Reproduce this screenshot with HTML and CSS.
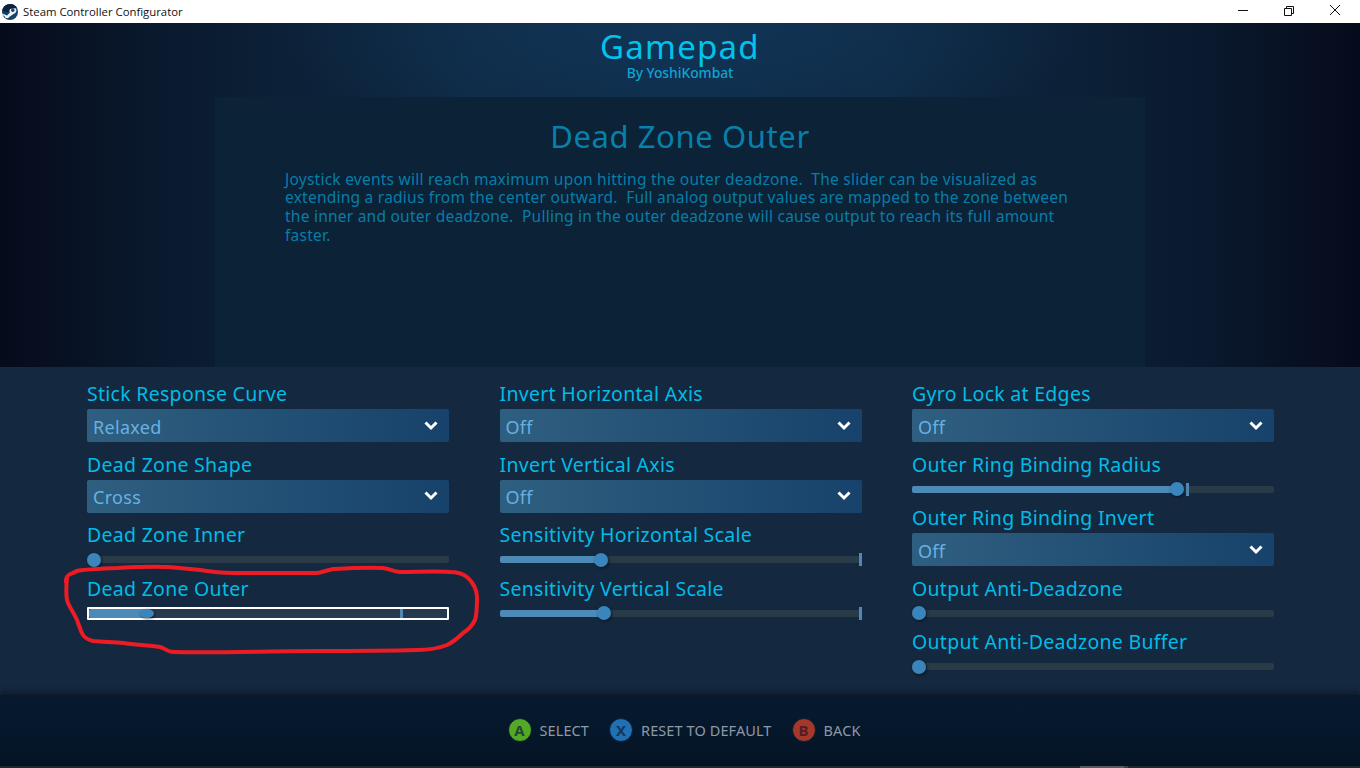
FILE: index.html
```html
<!DOCTYPE html>
<html lang="en">
<head>
<meta charset="utf-8">
<title>Steam Controller Configurator</title>
<link rel="stylesheet" href="styles.css">
</head>
<body>
<div class="app">
  <header class="titlebar">
    <svg class="logo" viewBox="0 0 16 16"><circle cx="8" cy="8" r="8" fill="#17406a"/><path d="M0.2 9.500 L5 11.500 L8 8.500 A3.500 3.500 0 1 1 11.500 10 L7.500 12.800 A2.600 2.600 0 0 1 2.600 12.200 L0.300 11 Z" fill="#eef2f5"/><path d="M0.200 7 A8 8 0 0 1 15 4 L8 5 L6 8.500 Z" fill="#0c2340"/><circle cx="10.800" cy="6.300" r="1.700" fill="#17406a"/></svg>
    <span class="titlebar-text">Steam Controller Configurator</span>
    <div class="window-controls">
      <svg class="win-icon" viewBox="0 0 46 23"><path d="M18 10.500h10" stroke="#111" fill="none"/></svg>
      <svg class="win-icon" viewBox="0 0 46 23"><path d="M18.500 8.500h7v7h-7z M20.500 8.500v-2h7v7h-2" stroke="#111" fill="none"/></svg>
      <svg class="win-icon" viewBox="0 0 46 23"><path d="M18 5l10 10M28 5l-10 10" stroke="#111" fill="none"/></svg>
    </div>
  </header>

  <section class="hero">
    <h1 class="game-title">Gamepad</h1>
    <div class="byline">By YoshiKombat</div>
    <div class="info-panel">
      <h2 class="info-title">Dead Zone Outer</h2>
      <p class="info-text">Joystick events will reach maximum upon hitting the outer deadzone.&nbsp; The slider can be visualized as extending a radius from the center outward.&nbsp; Full analog output values are mapped to the zone between the inner and outer deadzone.&nbsp; Pulling in the outer deadzone will cause output to reach its full amount faster.</p>
    </div>
  </section>

  <section class="settings">
    <div class="column">
      <div class="field field-select"><div class="label">Stick Response Curve</div><div class="select"><span>Relaxed</span><svg class="chev" viewBox="0 0 14 10"><path d="M1.500 1.500L7 7l5.500-5.500" /></svg></div></div>
      <div class="field field-select"><div class="label">Dead Zone Shape</div><div class="select"><span>Cross</span><svg class="chev" viewBox="0 0 14 10"><path d="M1.500 1.500L7 7l5.500-5.500" /></svg></div></div>
      <div class="field field-slider"><div class="label">Dead Zone Inner</div><div class="slider"><div class="thumb" style="left:7px"></div></div></div>
      <div class="field field-slider"><div class="label">Dead Zone Outer</div><div class="slider focused"><div class="fill" style="width:58px"></div><div class="tick" style="left:311px"></div><div class="thumb" style="left:58px"></div></div></div>
    </div>
    <div class="column">
      <div class="field field-select"><div class="label">Invert Horizontal Axis</div><div class="select"><span>Off</span><svg class="chev" viewBox="0 0 14 10"><path d="M1.500 1.500L7 7l5.500-5.500" /></svg></div></div>
      <div class="field field-select"><div class="label">Invert Vertical Axis</div><div class="select"><span>Off</span><svg class="chev" viewBox="0 0 14 10"><path d="M1.500 1.500L7 7l5.500-5.500" /></svg></div></div>
      <div class="field field-slider"><div class="label">Sensitivity Horizontal Scale</div><div class="slider"><div class="fill" style="width:101px"></div><div class="tick" style="left:359px"></div><div class="thumb" style="left:101px"></div></div></div>
      <div class="field field-slider"><div class="label">Sensitivity Vertical Scale</div><div class="slider"><div class="fill" style="width:104px"></div><div class="tick" style="left:359px"></div><div class="thumb" style="left:104px"></div></div></div>
    </div>
    <div class="column">
      <div class="field field-select"><div class="label">Gyro Lock at Edges</div><div class="select"><span>Off</span><svg class="chev" viewBox="0 0 14 10"><path d="M1.500 1.500L7 7l5.500-5.500" /></svg></div></div>
      <div class="field field-slider"><div class="label">Outer Ring Binding Radius</div><div class="slider"><div class="fill" style="width:265px"></div><div class="tick" style="left:274px"></div><div class="thumb" style="left:265px"></div></div></div>
      <div class="field field-select"><div class="label">Outer Ring Binding Invert</div><div class="select"><span>Off</span><svg class="chev" viewBox="0 0 14 10"><path d="M1.500 1.500L7 7l5.500-5.500" /></svg></div></div>
      <div class="field field-slider"><div class="label">Output Anti-Deadzone</div><div class="slider"><div class="thumb" style="left:7px"></div></div></div>
      <div class="field field-slider"><div class="label">Output Anti-Deadzone Buffer</div><div class="slider"><div class="thumb" style="left:7px"></div></div></div>
    </div>
  </section>

  <footer class="footer">
    <div class="hint"><span class="btn btn-a">A</span><span>SELECT</span></div>
    <div class="hint"><span class="btn btn-x">X</span><span>RESET TO DEFAULT</span></div>
    <div class="hint"><span class="btn btn-b">B</span><span>BACK</span></div>
  </footer>
  <div class="edge-strip"><div class="edge-thumb"></div><div class="edge-end"></div></div>

  <svg class="annotation" viewBox="0 0 1360 768"><path d="M66 582C65 577 69 574 73 573C76 571 80 570 83 570C95 569 105 568 117 568C135 567 150 566 167 567C180 568 190 569 200 570C212 572 222 573 233 573C262 573 290 573 317 573C323 572 328 570 333 569C350 568 366 567 383 568C390 569 395 572 400 572C417 572 433 571 450 572C458 572 463 574 467 577C473 582 477 590 477 597C477 606 477 614 475 620C472 626 468 630 463 633C458 638 453 642 447 645C437 649 427 650 417 650C384 651 350 651 317 651C269 651 221 653 173 652C167 652 165 648 160 647C148 645 136 645 123 643C113 642 103 642 93 641C88 640 85 638 83 635C80 630 79 625 77 620C74 613 69 607 67 600C66 594 66 588 67 578"/></svg>
</div>
</body>
</html>
```

FILE: styles.css
```css
* { box-sizing: border-box; }
html, body { margin: 0; height: 100%; }
body { font-family: "Noto Sans", "Open Sans", sans-serif; overflow: hidden; background: #04162c; }
.app { position: relative; width: 1360px; height: 768px; display: flex; flex-direction: column; }

.titlebar { height: 23px; background: #fff; display: flex; align-items: center; flex: none; padding: 0 2px; }
.logo { width: 16px; height: 16px; margin-right: 5px; }
.titlebar-text { font-size: 11.350px; color: #111; font-family: "Open Sans", sans-serif; }
.window-controls { margin-left: auto; display: flex; }
.win-icon { width: 46px; height: 23px; }

.hero { height: 344px; flex: none; position: relative; display: flex; flex-direction: column; align-items: center;
  background:
    radial-gradient(ellipse 420px 120px at 50% 0, rgba(18,62,100,.5), rgba(18,62,100,0)),
    linear-gradient(90deg, #060b1c 0, #0a1a2e 12%, #0f2a45 35%, #0f2c4a 50%, #0f2a45 65%, #0a1a2e 88%, #060b1c 100%); }
.game-title { margin: 6px 0 0; font-size: 33px; line-height: 36px; font-weight: 400; color: #00c3ec; letter-spacing: 1.250px; }
.byline { font-size: 13.800px; line-height: 15px; color: #0fa4d2; font-weight: 500; }
.info-panel { margin-top: 17px; width: 930px; height: 270px; background: #0b2237; padding: 20px 70px 0; }
.info-title { margin: 0; text-align: center; font-size: 31px; line-height: 38px; font-weight: 400; color: #0880ac; letter-spacing: .6px; }
.info-text { margin: 14.500px 0 0; font-size: 15.500px; line-height: 18.700px; color: #087da8; width: 790px; letter-spacing: .24px; }

.settings { height: 328px; flex: none; background: #14283f; padding: 15px 0 0 87px; display: flex; gap: 50.500px; }
.column { width: 362px; display: flex; flex-direction: column; }
.field-select { height: 70.500px; }
.field-slider { height: 53.500px; }
.label { font-size: 19.500px; line-height: 24px; height: 27px; color: #00bce6; letter-spacing: .28px; white-space: nowrap; }

.select { height: 33px; border-radius: 2px; background: linear-gradient(90deg, #2f5f80 0, #17426b 100%); display: flex; align-items: center; justify-content: space-between; padding: 2px 11px 0 6px; font-size: 18px; letter-spacing: .3px; color: #66b1e2; }
.chev { width: 14px; height: 10px; margin-top: -2px; }
.chev path { fill: none; stroke: #fff; stroke-width: 3px; }

.slider { position: relative; height: 7px; margin-top: 6px; background: #293b47; border-radius: 2px; }
.slider.focused { height: 13px; margin-top: 3px; border: 2px solid #fff; border-radius: 1px; background: #263a4e; }
.fill { position: absolute; left: 0; top: 0; height: 100%; background: #4d8ab5; border-radius: 2px; }
.thumb { position: absolute; top: 50%; width: 14px; height: 14px; margin: -7px 0 0 -7px; border-radius: 50%; background: #3b85bd; box-shadow: 1px 1px 3px rgba(0,0,0,.55); }
.focused .thumb { height: 9px; width: 14px; margin-top: -4.500px; }
.tick { position: absolute; top: -3px; bottom: -3px; width: 3px; background: #4d8ab5; }
.focused .tick { top: 0; bottom: 0; }

.footer { flex: 1; background: linear-gradient(180deg, #06192f 0, #05182c 40%, #051424 100%); display: flex; justify-content: center; align-items: center; gap: 20px; font-size: 14.500px; letter-spacing: .1px; color: #8d99a6; box-shadow: 0 -3px 5px rgba(14,20,26,.6); position: relative; padding: 0 0 1px 8px; }
.hint { display: flex; align-items: center; gap: 8px; }
.btn { width: 24px; height: 24px; border-radius: 50%; display: flex; align-items: center; justify-content: center; font-size: 15px; font-weight: 700; border: 1px solid #0a1c30; }
.btn-a { background: #53a926; color: #1e4a2e; }
.btn-x { background: #2070b4; color: #13375c; }
.btn-b { background: #a6382a; color: #521e26; }

.edge-strip { height: 2px; flex: none; background: #1c2a30; display: flex; position: relative; }
.edge-thumb { margin-left: 1080px; width: 44px; background: #555c60; }
.edge-end { width: 4px; background: #3a4448; }

.annotation { position: absolute; inset: 0; width: 1360px; height: 768px; pointer-events: none; }
.annotation path { fill: none; stroke: #ed1c24; stroke-width: 4px; stroke-linecap: round; stroke-linejoin: round; }
```
